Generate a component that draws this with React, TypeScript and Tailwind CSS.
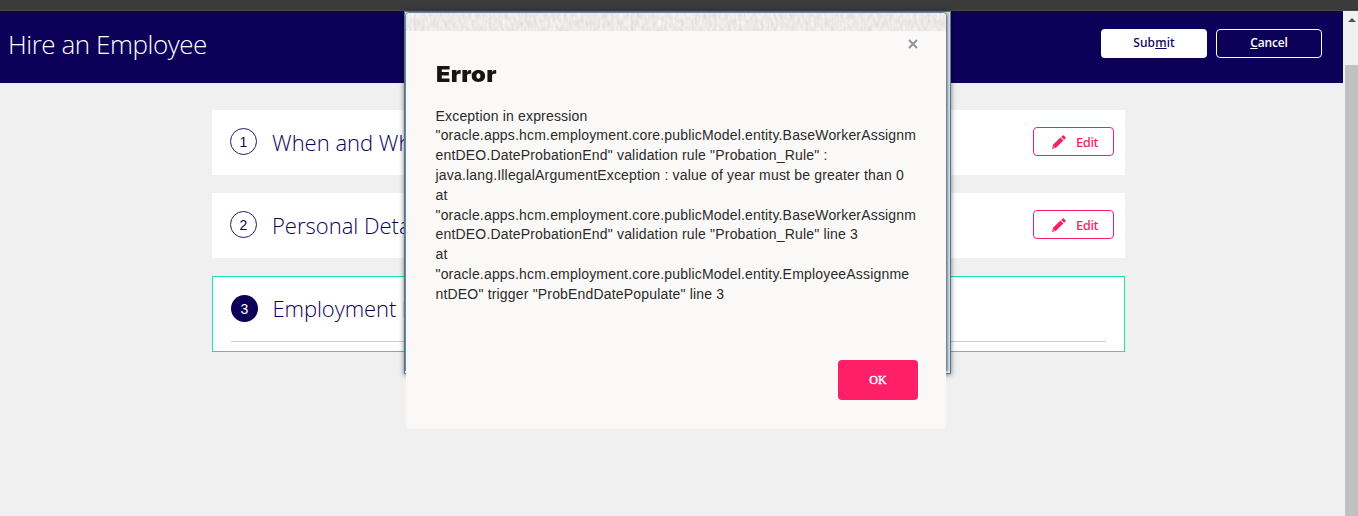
import React from "react";

const messageLines = [
  "Exception in expression",
  '"oracle.apps.hcm.employment.core.publicModel.entity.BaseWorkerAssignm',
  'entDEO.DateProbationEnd" validation rule "Probation_Rule" :',
  "java.lang.IllegalArgumentException : value of year must be greater than 0",
  "at",
  '"oracle.apps.hcm.employment.core.publicModel.entity.BaseWorkerAssignm',
  'entDEO.DateProbationEnd" validation rule "Probation_Rule" line 3',
  "at",
  '"oracle.apps.hcm.employment.core.publicModel.entity.EmployeeAssignme',
  'ntDEO" trigger "ProbEndDatePopulate" line 3',
];

function PencilIcon() {
  return (
    <svg width="14" height="14" viewBox="0 0 14 14" fill="#fb1f66">
      <path d="M0 14 L1 9.8 L8.4 2.6 L11.4 5.5 L4 12.8 Z" />
      <path d="M9.2 1.9 L10.6 .5 Q11.2 0 11.8 .5 L13.5 2.2 Q14 2.8 13.5 3.4 L12.1 4.8 Z" />
      <path d="M1.1 11.4 L2.6 12.9" stroke="#fff" strokeWidth=".7" />
    </svg>
  );
}

function EditButton() {
  return (
    <button className="flex h-[29px] w-[81px] items-center rounded-[4px] border border-[#fb1f66] pl-[18px] text-[#fb1f66]">
      <PencilIcon />
      <span className="ml-[10px] pt-px font-['Noto_Sans',sans-serif] text-[13px] leading-[18px] font-medium tracking-[-0.4px]">Edit</span>
    </button>
  );
}

function Step({ n, filled = false }: { n: number; filled?: boolean }) {
  return (
    <span
      className={
        filled
          ? "mt-px flex size-[27px] shrink-0 items-center justify-center rounded-full bg-[#0d0059] font-['Liberation_Sans',sans-serif] text-[14px] leading-none text-white"
          : "mt-px flex size-[27px] shrink-0 items-center justify-center rounded-full border border-[#0d0059]/90 font-['Liberation_Sans',sans-serif] text-[14px] leading-none text-[#0d0059]"
      }
    >
      {n}
    </span>
  );
}

function TextureStrip() {
  return (
    <svg className="block h-[18px] w-full rounded-t-[4px]" aria-hidden="true">
      <filter id="grain" x="0" y="0" width="100%" height="100%" colorInterpolationFilters="sRGB">
        <feTurbulence type="fractalNoise" baseFrequency="0.36 0.14" numOctaves="2" seed="6" />
        <feColorMatrix values="0.15 0 0 0 0.847  0.15 0 0 0 0.843  0.15 0 0 0 0.836  0 0 0 0 1" />
      </filter>
      <rect width="100%" height="100%" filter="url(#grain)" />
    </svg>
  );
}

function ErrorDialog() {
  return (
    <section className="absolute top-[13px] left-[406px] flex h-[416px] w-[540px] flex-col overflow-hidden rounded-[4px] bg-[#faf9f8] font-['Liberation_Sans',sans-serif]">
      <TextureStrip />
      <div className="flex h-[28px] justify-end pt-[8px] pr-[28px]">
        <svg width="10" height="10" viewBox="0 0 10 10" stroke="#8e9297" strokeWidth="1.8">
          <path d="M1 1 L9 9 M9 1 L1 9" />
        </svg>
      </div>
      <h2 className="ml-[29.5px] h-[47.6px] origin-left scale-x-[1.08] self-start font-['Inter',sans-serif] text-[22px] leading-[30px] font-black tracking-[0.2px] text-[#161513]">Error</h2>
      <div className="ml-[29.5px] h-[253.4px] text-[14px] leading-[19.8px] tracking-[0.18px] whitespace-nowrap text-[#2b2a29]">
        {messageLines.map((line, i) => (
          <div key={i}><span>{line}</span></div>
        ))}
      </div>
      <button className="mr-[28px] flex h-[40px] w-[80px] shrink-0 items-center justify-center self-end rounded-[4px] bg-[#fd2068] font-['Liberation_Serif',serif] text-[12px] font-normal text-white [-webkit-text-stroke:0.4px_white]">
        OK
      </button>
    </section>
  );
}

export default function App() {
  return (
    <div className="relative flex h-[516px] w-[1358px] flex-col overflow-hidden bg-[#f0f0f0] font-['Open_Sans',sans-serif]">
      <div className="h-[11px] shrink-0 border-b border-[#4b4b4b] bg-[#3b3b3b]" />
      <div className="flex flex-1">
        <main className="w-[1343px]">
          <header className="flex h-[72px] justify-between bg-[#0d0059] pr-[21px] pl-[8px]">
            <h1 className="pt-[14px] text-[26px] leading-[38px] font-light tracking-[-0.45px] whitespace-nowrap text-white">Hire an Employee</h1>
            <div className="flex gap-[9px] pt-[18px]">
              <button className="flex h-[29px] w-[106px] justify-center rounded-[4px] bg-white pt-[5px] font-['Noto_Sans',sans-serif] text-[12px] leading-[18px] font-medium tracking-[0.1px] text-[#0d0059]">
                <span>Sub<u>m</u>it</span>
              </button>
              <button className="flex h-[29px] w-[106px] justify-center rounded-[4px] border border-white pt-[4px] text-[12px] leading-[18px] font-semibold tracking-[-0.15px] text-white">
                <span><u>C</u>ancel</span>
              </button>
            </div>
          </header>
          <div className="ml-[212px] flex w-[913px] flex-col gap-[18px] pt-[27px] text-[#0d0059]">
            <div className="flex h-[65px] items-start bg-white pt-[17px] pr-[11px] pl-[18px]">
              <Step n={1} />
              <h2 className="ml-[15px] flex-1 text-[22px] leading-[30px] font-light">When and Why</h2>
              <EditButton />
            </div>
            <div className="flex h-[65px] items-start bg-white pt-[17px] pr-[11px] pl-[18px]">
              <Step n={2} />
              <h2 className="ml-[15px] flex-1 text-[22px] leading-[30px] font-light">Personal Details</h2>
              <EditButton />
            </div>
            <div className="h-[76px] border border-[#1ddcb8] bg-white px-[18px] pt-[17px]">
              <div className="flex h-[48px] items-start border-b border-[#cfcfcf]">
                <Step n={3} filled />
                <h2 className="-mt-px ml-[14.5px] text-[22px] leading-[30px] font-light tracking-[-0.08px]">Employment Details</h2>
              </div>
            </div>
          </div>
        </main>
        <aside className="flex w-[15px] flex-col bg-[#f1f1f1] pl-[2px]">
          <div className="flex h-[54px] justify-center pt-[7px]">
            <svg width="8" height="5" viewBox="0 0 8 5" fill="#505050"><path d="M4 0 L8 4 H0 Z" /></svg>
          </div>
          <div className="flex-1 bg-[#c1c1c1]" />
        </aside>
      </div>
      <div className="absolute top-[11px] left-[404px] h-[363px] w-[547px] border border-[#5b7a99] bg-[#e2e4e5] shadow-[0_1px_5px_rgba(0,0,0,0.5)]">
        <div className="h-[359px] w-[542px] rounded-t-[4px] border border-[#6488a8] shadow-[1px_0_3px_rgba(0,0,0,0.4)]" />
      </div>
      <ErrorDialog />
    </div>
  );
}
